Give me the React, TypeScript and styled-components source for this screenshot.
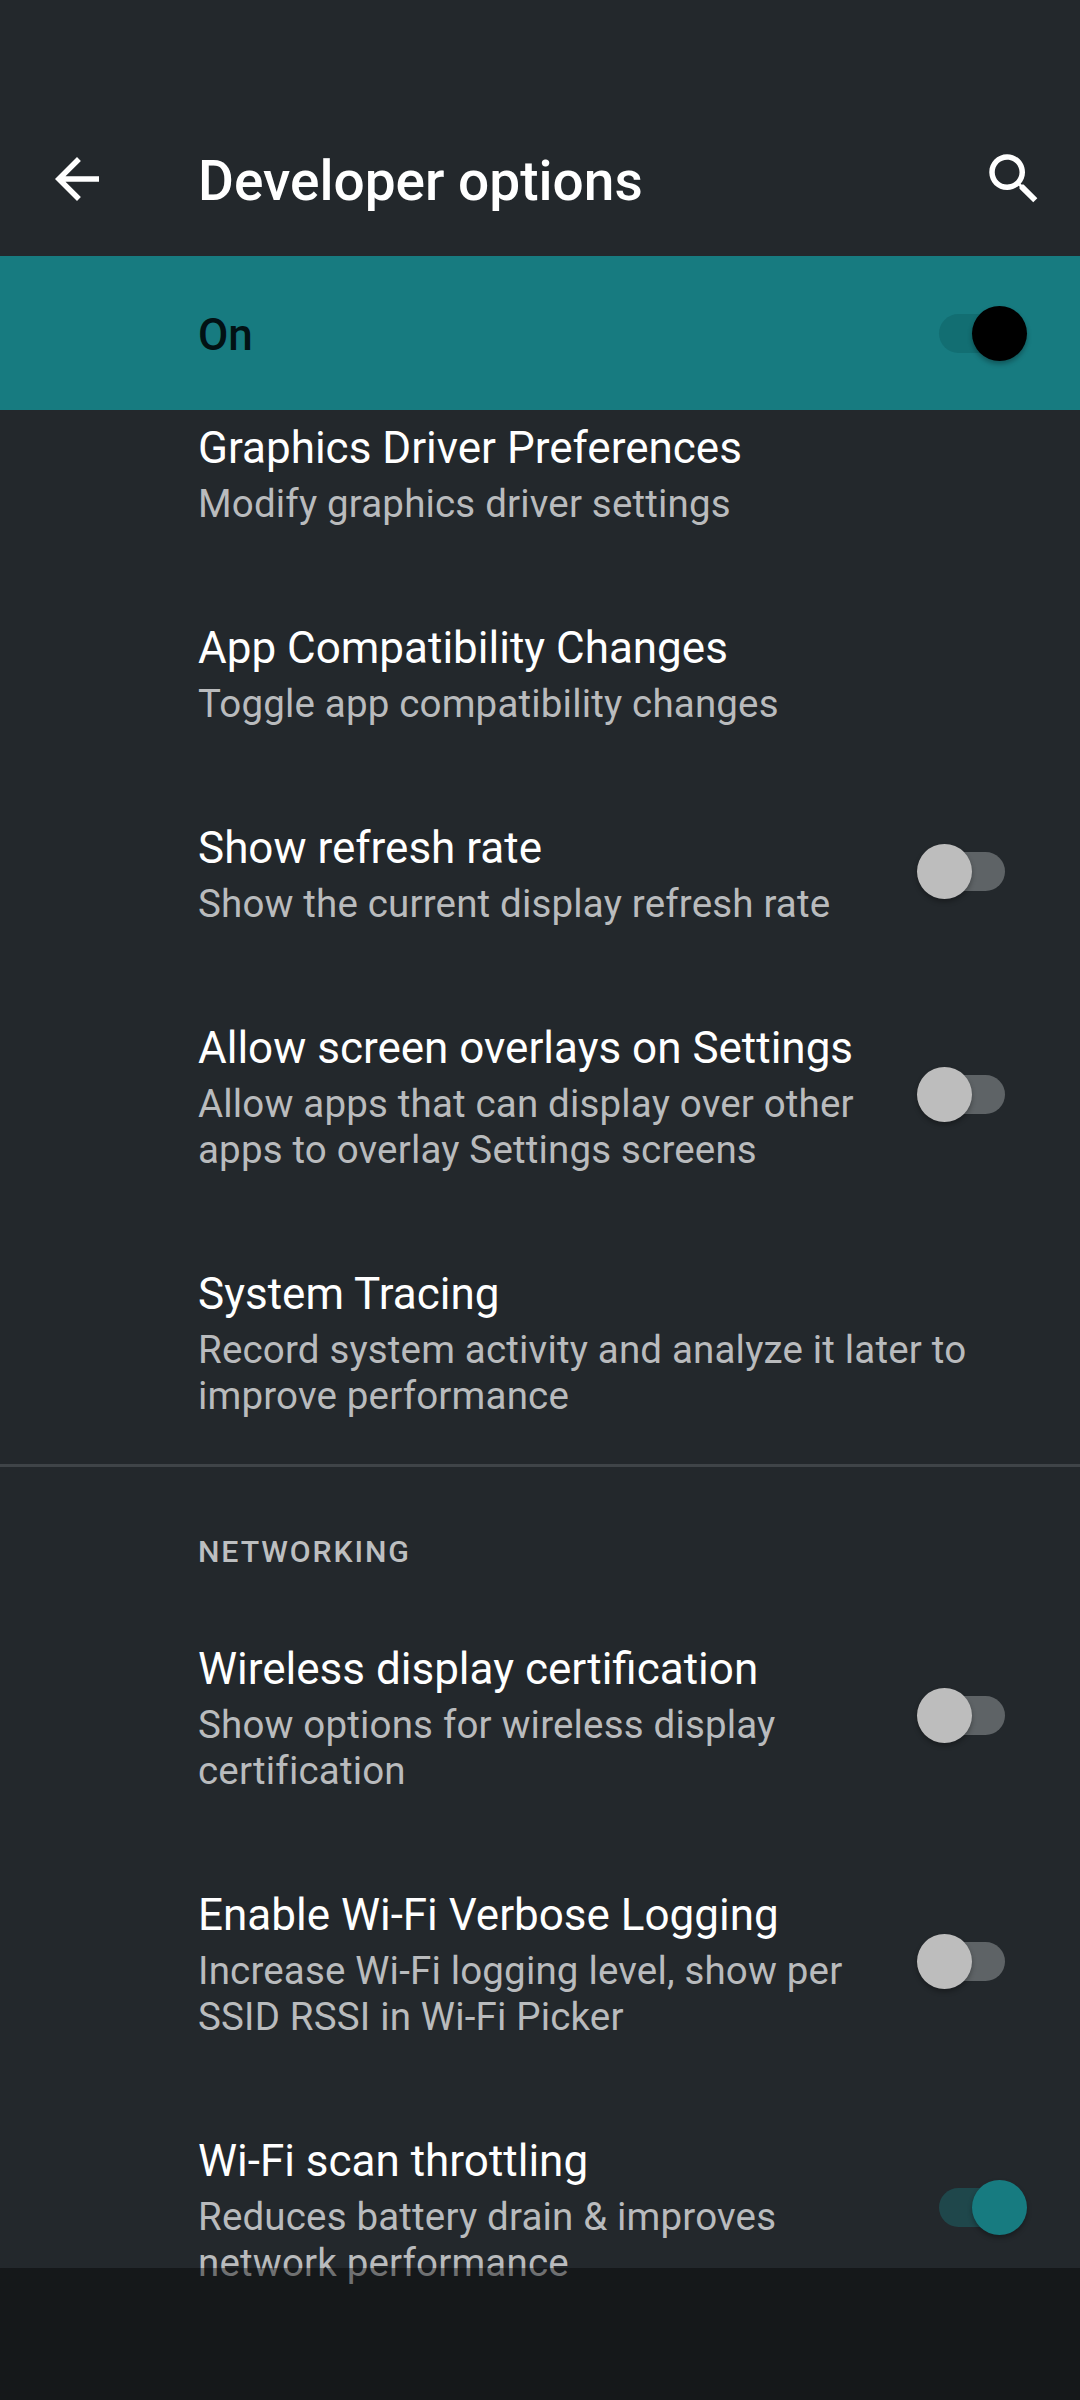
import React from 'react';
import styled, { createGlobalStyle } from 'styled-components';

interface RowData {
  title: string;
  summary: string[];
  toggle?: 'on' | 'off';
}

const GlobalStyle = createGlobalStyle`
  html, body {
    margin: 0;
    padding: 0;
    background: #23282c;
  }
  * {
    box-sizing: border-box;
  }
`;

const Screen = styled.div`
  position: relative;
  display: flex;
  flex-direction: column;
  width: 1080px;
  height: 2400px;
  overflow: hidden;
  background: #23282c;
  font-family: Roboto, "Liberation Sans", sans-serif;
`;

const Toolbar = styled.header`
  display: flex;
  align-items: center;
  height: 256px;
  padding: 102px 33px 0 44px;
  flex: none;
`;

const ToolbarIcon = styled.svg`
  display: block;
  width: 66px;
  height: 66px;
  flex: none;
  fill: #fff;
`;

const ToolbarTitle = styled.h1`
  flex: 1;
  margin: 4px 0 0 88px;
  font-size: 55px;
  font-weight: 500;
  line-height: 64px;
  color: #fff;
`;

const MasterBar = styled.div`
  display: flex;
  align-items: center;
  justify-content: space-between;
  flex: none;
  height: 154px;
  padding: 0 75px 0 198px;
  background: #177b80;
`;

const MasterLabel = styled.span`
  padding-top: 3px;
  font-size: 44px;
  font-weight: 500;
  color: #021214;
`;

const ScrollArea = styled.main`
  flex: 1;
  min-height: 0;
  overflow: hidden;
`;

const List = styled.div`
  margin-top: -40px;
`;

const Row = styled.div`
  display: flex;
  align-items: center;
  padding: 46px 75px 43px 198px;
`;

const RowText = styled.div`
  flex: 1;
  min-width: 0;
`;

const RowTitle = styled.div`
  font-size: 44px;
  line-height: 65px;
  color: #fff;
`;

const RowSummary = styled.div`
  font-size: 38.5px;
  line-height: 46px;
  letter-spacing: 0.17px;
  color: #b9bbbd;
  white-space: nowrap;
`;

const Divider = styled.hr`
  height: 3px;
  margin: 2px 0 0;
  border: 0;
  background: #3f4448;
`;

const SectionHeader = styled.div`
  height: 124px;
  padding: 67px 0 0 198px;
  font-size: 30.25px;
  font-weight: 500;
  line-height: 36px;
  letter-spacing: 1.9px;
  color: #bdbfc0;
`;

const Track = styled.div<{ $on: boolean; $onAccent?: boolean }>`
  position: relative;
  flex: none;
  width: 66px;
  height: 39px;
  border-radius: 20px;
  background: ${props => props.$onAccent ? '#126e72' : props.$on ? '#1f474b' : '#5e6366'};
`;

const Thumb = styled.div<{ $on: boolean; $onAccent?: boolean }>`
  position: absolute;
  top: -8px;
  left: ${props => props.$on ? '33px' : '-22px'};
  width: 55px;
  height: 55px;
  border-radius: 50%;
  background: ${props => props.$onAccent ? '#000' : props.$on ? '#177b80' : '#bdbdbd'};
  box-shadow: 0 3px 5px rgba(0, 0, 0, 0.3);
`;

const NavOverlay = styled.div`
  position: absolute;
  left: 0;
  right: 0;
  bottom: 0;
  height: 132px;
  background: rgba(0, 0, 0, 0.4);
`;

const debuggingRows: RowData[] = [
  { title: 'Graphics Driver Preferences', summary: ['Modify graphics driver settings'] },
  { title: 'App Compatibility Changes', summary: ['Toggle app compatibility changes'] },
  { title: 'Show refresh rate', summary: ['Show the current display refresh rate'], toggle: 'off' },
  {
    title: 'Allow screen overlays on Settings',
    summary: ['Allow apps that can display over other', 'apps to overlay Settings screens'],
    toggle: 'off',
  },
  {
    title: 'System Tracing',
    summary: ['Record system activity and analyze it later to', 'improve performance'],
  },
];

const networkingRows: RowData[] = [
  {
    title: 'Wireless display certification',
    summary: ['Show options for wireless display', 'certification'],
    toggle: 'off',
  },
  {
    title: 'Enable Wi-Fi Verbose Logging',
    summary: ['Increase Wi-Fi logging level, show per', 'SSID RSSI in Wi-Fi Picker'],
    toggle: 'off',
  },
  {
    title: 'Wi-Fi scan throttling',
    summary: ['Reduces battery drain & improves', 'network performance'],
    toggle: 'on',
  },
];

const SettingRow: React.FC<{ row: RowData }> = ({ row }) => (
  <Row>
    <RowText>
      <RowTitle>{row.title}</RowTitle>
      {row.summary.map(line => (
        <RowSummary key={line}>{line}</RowSummary>
      ))}
    </RowText>
    {row.toggle && (
      <Track $on={row.toggle === 'on'}>
        <Thumb $on={row.toggle === 'on'} />
      </Track>
    )}
  </Row>
);

export default function App() {
  return (
    <Screen>
      <GlobalStyle />
      <Toolbar>
        <ToolbarIcon viewBox="0 0 24 24">
          <path d="M20 11H7.83l5.59-5.59L12 4l-8 8 8 8 1.41-1.41L7.83 13H20v-2z" />
        </ToolbarIcon>
        <ToolbarTitle>Developer options</ToolbarTitle>
        <ToolbarIcon viewBox="0 0 24 24">
          <path d="M15.5 14h-.79l-.28-.27C15.41 12.59 16 11.11 16 9.5 16 5.91 13.09 3 9.5 3S3 5.91 3 9.5 5.91 16 9.5 16c1.61 0 3.09-.59 4.23-1.57l.27.28v.79l5 4.99L20.49 19l-4.99-5zm-6 0C7.01 14 5 11.99 5 9.5S7.01 5 9.5 5 14 7.01 14 9.5 11.99 14 9.5 14z" />
        </ToolbarIcon>
      </Toolbar>
      <MasterBar>
        <MasterLabel>On</MasterLabel>
        <Track $on $onAccent>
          <Thumb $on $onAccent />
        </Track>
      </MasterBar>
      <ScrollArea>
        <List>
          {debuggingRows.map(row => (
            <SettingRow key={row.title} row={row} />
          ))}
          <Divider />
          <SectionHeader>NETWORKING</SectionHeader>
          {networkingRows.map(row => (
            <SettingRow key={row.title} row={row} />
          ))}
        </List>
      </ScrollArea>
      <NavOverlay />
    </Screen>
  );
}
